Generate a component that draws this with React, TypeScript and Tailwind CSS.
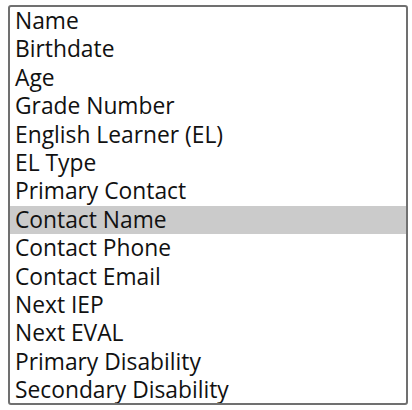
import React from 'react';

const FIELDS = [
    'Name',
    'Birthdate',
    'Age',
    'Grade Number',
    'English Learner (EL)',
    'EL Type',
    'Primary Contact',
    'Contact Name',
    'Contact Phone',
    'Contact Email',
    'Next IEP',
    'Next EVAL',
    'Primary Disability',
    'Secondary Disability',
];

export default function App() {
    const selected = 'Contact Name';

    return (
        <div className="h-[410px] w-[412px] bg-white pl-2 pt-[5px]">
            <div
                role="listbox"
                aria-multiselectable="true"
                className="h-[400px] w-[400px] overflow-hidden rounded-[3px] border-2 border-[#707070] bg-white"
                style={{ fontFamily: '"Open Sans", "Noto Sans", sans-serif' }}
            >
                {FIELDS.map((field) => (
                    <div
                        key={field}
                        role="option"
                        aria-selected={field === selected}
                        className={
                            field === selected
                                ? 'h-[28.4px] whitespace-nowrap bg-[#cbcbcb] pl-[5px] text-[22.8px] leading-[28.4px] text-[#111]'
                                : 'h-[28.4px] whitespace-nowrap pl-[5px] text-[22.8px] leading-[28.4px] text-[#111]'
                        }
                    >
                        {field}
                    </div>
                ))}
            </div>
        </div>
    );
}
